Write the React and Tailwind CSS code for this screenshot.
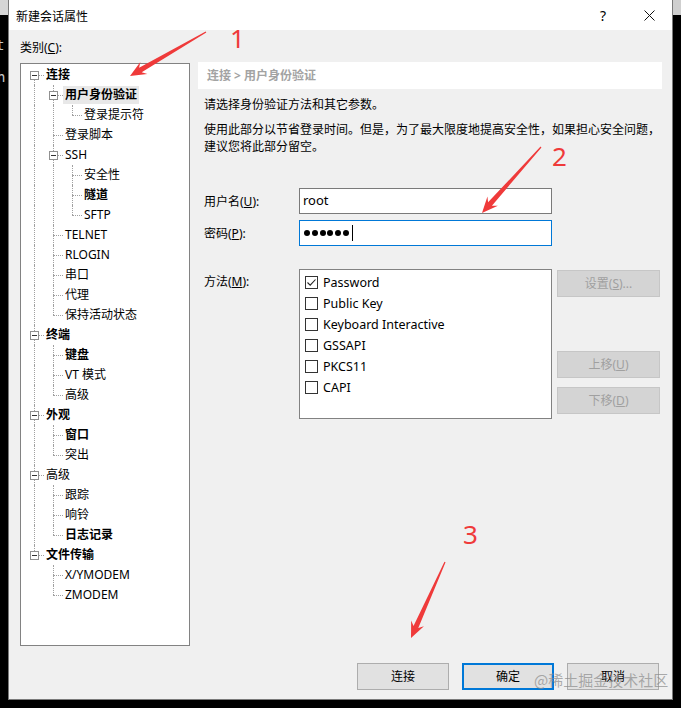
import React from 'react';

const tree = [
  { t: '连接', l: 0, b: true, exp: true },
  { t: '用户身份验证', l: 1, b: true, exp: true, sel: true },
  { t: '登录提示符', l: 2 },
  { t: '登录脚本', l: 1 },
  { t: 'SSH', l: 1, exp: true },
  { t: '安全性', l: 2 },
  { t: '隧道', l: 2, b: true },
  { t: 'SFTP', l: 2 },
  { t: 'TELNET', l: 1 },
  { t: 'RLOGIN', l: 1 },
  { t: '串口', l: 1 },
  { t: '代理', l: 1 },
  { t: '保持活动状态', l: 1 },
  { t: '终端', l: 0, b: true, exp: true },
  { t: '键盘', l: 1, b: true },
  { t: 'VT 模式', l: 1 },
  { t: '高级', l: 1 },
  { t: '外观', l: 0, b: true, exp: true },
  { t: '窗口', l: 1, b: true },
  { t: '突出', l: 1 },
  { t: '高级', l: 0, exp: true },
  { t: '跟踪', l: 1 },
  { t: '响铃', l: 1 },
  { t: '日志记录', l: 1, b: true },
  { t: '文件传输', l: 0, b: true, exp: true },
  { t: 'X/YMODEM', l: 1 },
  { t: 'ZMODEM', l: 1 },
];

const methods = ['Password', 'Public Key', 'Keyboard Interactive', 'GSSAPI', 'PKCS11', 'CAPI'];

// does the branch at level a keep going below row i
function continues(i, a) {
  for (let j = i + 1; j < tree.length; j++) {
    if (tree[j].l < a) return false;
    if (tree[j].l === a) return true;
  }
  return false;
}

const TreeRow = ({ item, i }) => {
  const cols = [];
  for (let a = 0; a < item.l; a++) {
    cols.push(
      <div key={a} className="relative w-[19px] h-full shrink-0">
        {continues(i, a) && (
          <div className="absolute left-[9px] top-0 bottom-0 border-l border-dotted border-[#a0a0a0]" />
        )}
      </div>
    );
  }
  return (
    <div className="flex items-center h-[20px]">
      {cols}
      <div className="relative w-[19px] h-full shrink-0">
        {i > 0 && <div className="absolute left-[9px] top-0 h-[10px] border-l border-dotted border-[#a0a0a0]" />}
        {continues(i, item.l) && (
          <div className="absolute left-[9px] top-[10px] bottom-0 border-l border-dotted border-[#a0a0a0]" />
        )}
        <div className="absolute left-[9px] top-[10px] w-[10px] border-t border-dotted border-[#a0a0a0]" />
        {item.exp && (
          <div className="absolute left-[5px] top-[6px] w-[9px] h-[9px] border border-[#919191] bg-white flex items-center justify-center">
            <div className="w-[5px] h-px bg-[#333]" />
          </div>
        )}
      </div>
      <span
        className={`px-[2px] leading-[18px] whitespace-nowrap text-[12px] text-black ${item.b ? 'font-bold' : ''} ${item.sel ? 'bg-[#e8e8e8]' : ''}`}
      >
        {item.t}
      </span>
    </div>
  );
};

const Arrow = ({ tx, ty, px, py }) => {
  const dx = px - tx;
  const dy = py - ty;
  const len = Math.hypot(dx, dy);
  const ux = dx / len;
  const uy = dy / len;
  const nx = -uy;
  const ny = ux;
  const W = [px - ux * 16, py - uy * 16];
  const S = [px - ux * 12, py - uy * 12];
  const pts = [
    [tx + nx * 0.6, ty + ny * 0.6],
    [S[0] + nx * 2.6, S[1] + ny * 2.6],
    [W[0] + nx * 7, W[1] + ny * 7],
    [px, py],
    [W[0] - nx * 7, W[1] - ny * 7],
    [S[0] - nx * 2.6, S[1] - ny * 2.6],
    [tx - nx * 0.6, ty - ny * 0.6],
  ];
  return <polygon points={pts.map((p) => p.join(',')).join(' ')} fill="#ef3a3a" />;
};

const Btn = ({ children, disabled, primary, className = '' }) => (
  <div
    className={`h-[27px] shrink-0 flex items-center justify-center text-[12px] ${
      disabled
        ? 'bg-[#d4d4d4] border border-[#c6c6c6] text-[#a0a0a0]'
        : primary
        ? 'bg-[#e1e1e1] border-2 border-[#0078d7] text-black'
        : 'bg-[#e1e1e1] border border-[#adadad] text-black'
    } ${className}`}
  >
    {children}
  </div>
);

export default function App() {
  return (
    <div className="relative w-[681px] h-[708px] bg-black overflow-hidden font-[family-name:'Noto_Sans','Noto_Sans_CJK_SC',sans-serif]">
      <div className="flex">
        {/* terminal behind, left edge */}
        <div className="w-[8px] h-[708px] overflow-hidden flex flex-col">
          <div className="h-[15px] bg-[#d6d6d6]" />
          <div className="mt-[20px] ml-[-4px] text-[14px] leading-[20px] text-[#c8c8c8] font-[family-name:'DejaVu_Sans_Mono',monospace]">t</div>
          <div className="mt-[12px] ml-[-3px] text-[14px] leading-[20px] text-[#c8c8c8] font-[family-name:'DejaVu_Sans_Mono',monospace]">h</div>
        </div>

        {/* dialog window */}
        <div className="w-[665px] h-[700px] flex flex-col border-x border-b border-[#7a7a7a]">
          <div className="h-[30px] bg-white flex items-center shrink-0">
            <span className="ml-[7px] mt-[3px] text-[12px] text-black">新建会话属性</span>
            <div className="ml-auto w-[46px] h-full flex items-center justify-center text-[14px] text-black">?</div>
            <div className="w-[46px] h-full flex items-center justify-center">
              <svg width="11" height="11" viewBox="0 0 11 11">
                <path d="M0.5 0.5 L10.5 10.5 M10.5 0.5 L0.5 10.5" stroke="#111" strokeWidth="1" />
              </svg>
            </div>
          </div>

          <div className="flex-1 bg-[#f0f0f0] flex flex-col pl-[11px]">
            <div className="flex">
              {/* category tree */}
              <div className="w-[170px] pt-[10px] shrink-0">
                <div className="text-[12px] leading-[16px] text-black">
                  类别(<u>C</u>):
                </div>
                <div className="mt-[7px] h-[583px] border border-[#828282] bg-white pl-[4px] pt-[1px]">
                  {tree.map((item, i) => (
                    <TreeRow key={i} item={item} i={i} />
                  ))}
                </div>
              </div>

              {/* settings panel */}
              <div className="ml-[8px] w-[464px] pt-[32px] shrink-0">
                <div className="h-[27px] bg-white flex items-center pl-[9px] text-[12px] font-bold text-[#a3a3a3]">
                  连接 &gt; 用户身份验证
                </div>
                <div className="pl-[6px] text-[12px] text-black">
                  <div className="mt-[8px] leading-[16px]">请选择身份验证方法和其它参数。</div>
                  <div className="mt-[7.5px] leading-[17px] whitespace-nowrap">
                    使用此部分以节省登录时间。但是，为了最大限度地提高安全性，如果担心安全问题，
                    <br />
                    建议您将此部分留空。
                  </div>

                  <div className="mt-[33.5px] flex items-center">
                    <div className="w-[95px] shrink-0 pt-[1px]">
                      用户名(<u>U</u>):
                    </div>
                    <div className="w-[253px] h-[26px] shrink-0 border border-[#7a7a7a] bg-white flex items-center pl-[3px] text-[13px]">
                      root
                    </div>
                  </div>
                  <div className="mt-[6px] flex items-center">
                    <div className="w-[95px] shrink-0 pt-[1px]">
                      密码(<u>P</u>):
                    </div>
                    <div className="w-[253px] h-[26px] shrink-0 border border-[#0078d7] bg-white flex items-center pl-[4px] gap-[1.8px]">
                      {[0, 1, 2, 3, 4, 5].map((d) => (
                        <div key={d} className="w-[6px] h-[6px] rounded-full bg-black" />
                      ))}
                      <div className="ml-[1px] w-px h-[16px] bg-black" />
                    </div>
                  </div>

                  <div className="mt-[23px] flex items-start">
                    <div className="w-[95px] shrink-0 pt-[5px] leading-[16px]">
                      方法(<u>M</u>):
                    </div>
                    <div className="w-[253px] h-[150px] shrink-0 border border-[#828282] bg-white pt-[2px] pl-[5px]">
                      {methods.map((m, i) => (
                        <div key={m} className="h-[21px] flex items-center">
                          <div className="w-[13px] h-[13px] border border-[#333] bg-white flex items-center justify-center">
                            {i === 0 && (
                              <svg width="11" height="11" viewBox="0 0 11 11">
                                <path d="M1.5 5.5 L4.2 8.2 L9.5 2.5" fill="none" stroke="#222" strokeWidth="1.1" />
                              </svg>
                            )}
                          </div>
                          <span className="ml-[5px] text-[12.5px] leading-[16px]">{m}</span>
                        </div>
                      ))}
                    </div>
                    <div className="ml-[5px] w-[103px] shrink-0 flex flex-col">
                      <Btn disabled className="mt-[1px]">
                        设置(<u>S</u>)...
                      </Btn>
                      <Btn disabled className="mt-[54px]">
                        上移(<u>U</u>)
                      </Btn>
                      <Btn disabled className="mt-[9px]">
                        下移(<u>D</u>)
                      </Btn>
                    </div>
                  </div>
                </div>
              </div>
            </div>

            <div className="mt-[17px] flex justify-end gap-[13px] pr-[13px]">
              <Btn className="w-[92px]">连接</Btn>
              <Btn primary className="w-[92px]">确定</Btn>
              <Btn className="w-[92px]">取消</Btn>
            </div>
          </div>
        </div>

        {/* right edge */}
        <div className="w-[8px] h-[708px] flex flex-col">
          <div className="h-[15px] bg-[#cfcfcf]" />
        </div>
      </div>

      {/* red annotations */}
      <svg className="absolute left-0 top-0 pointer-events-none" width="681" height="708">
        <Arrow tx={206} ty={32} px={130} py={76} />
        <Arrow tx={541} ty={147} px={482} py={213} />
        <Arrow tx={445} ty={562} px={411} py={638} />
      </svg>
      <span className="absolute left-[230px] top-[22px] text-[26px] leading-[32px] text-[#ef3a3a]">1</span>
      <span className="absolute left-[552px] top-[140px] text-[26px] leading-[32px] text-[#ef3a3a]">2</span>
      <span className="absolute left-[463px] top-[518px] text-[26px] leading-[32px] text-[#ef3a3a]">3</span>

      {/* watermark */}
      <span className="absolute left-[534px] top-[670px] text-[15px] leading-[20px] text-[#8a8a8a]/70 whitespace-nowrap font-[family-name:'Noto_Sans_CJK_SC',sans-serif]">
        @稀土掘金技术社区
      </span>
    </div>
  );
}
